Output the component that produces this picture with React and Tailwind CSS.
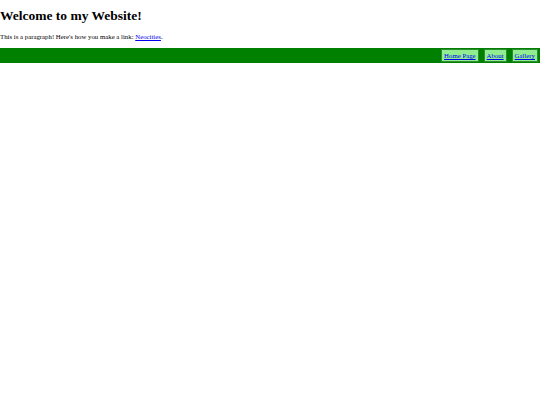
export default function App() {
  return (
    <div className="min-h-[405px] bg-white text-black" style={{ fontFamily: '"Liberation Serif", "Times New Roman", serif' }}>
      <h1 className="m-0 pt-[8px] text-[13.5px] font-bold leading-[16px]">Welcome to my Website!</h1>
      <p className="mt-[9px] text-[6.8px] leading-[8px]">
        This is a paragraph! Here's how you make a link:{' '}
        <a href="#" className="text-[#0000ee] underline">Neocities</a>.
      </p>
      <nav className="mt-[7px] flex h-[15px] items-center justify-end gap-[5px] bg-[#008000] pr-[2px]">
        <a href="#" className="border border-[#2e8b2e] bg-[#90ee90] px-[2px] text-[6.8px] leading-[11px] text-[#0000ee] underline">Home Page</a>
        <a href="#" className="border border-[#2e8b2e] bg-[#90ee90] px-[2px] text-[6.8px] leading-[11px] text-[#0000ee] underline">About</a>
        <a href="#" className="border border-[#2e8b2e] bg-[#90ee90] px-[2px] text-[6.8px] leading-[11px] text-[#0000ee] underline">Gallery</a>
      </nav>
    </div>
  );
}
